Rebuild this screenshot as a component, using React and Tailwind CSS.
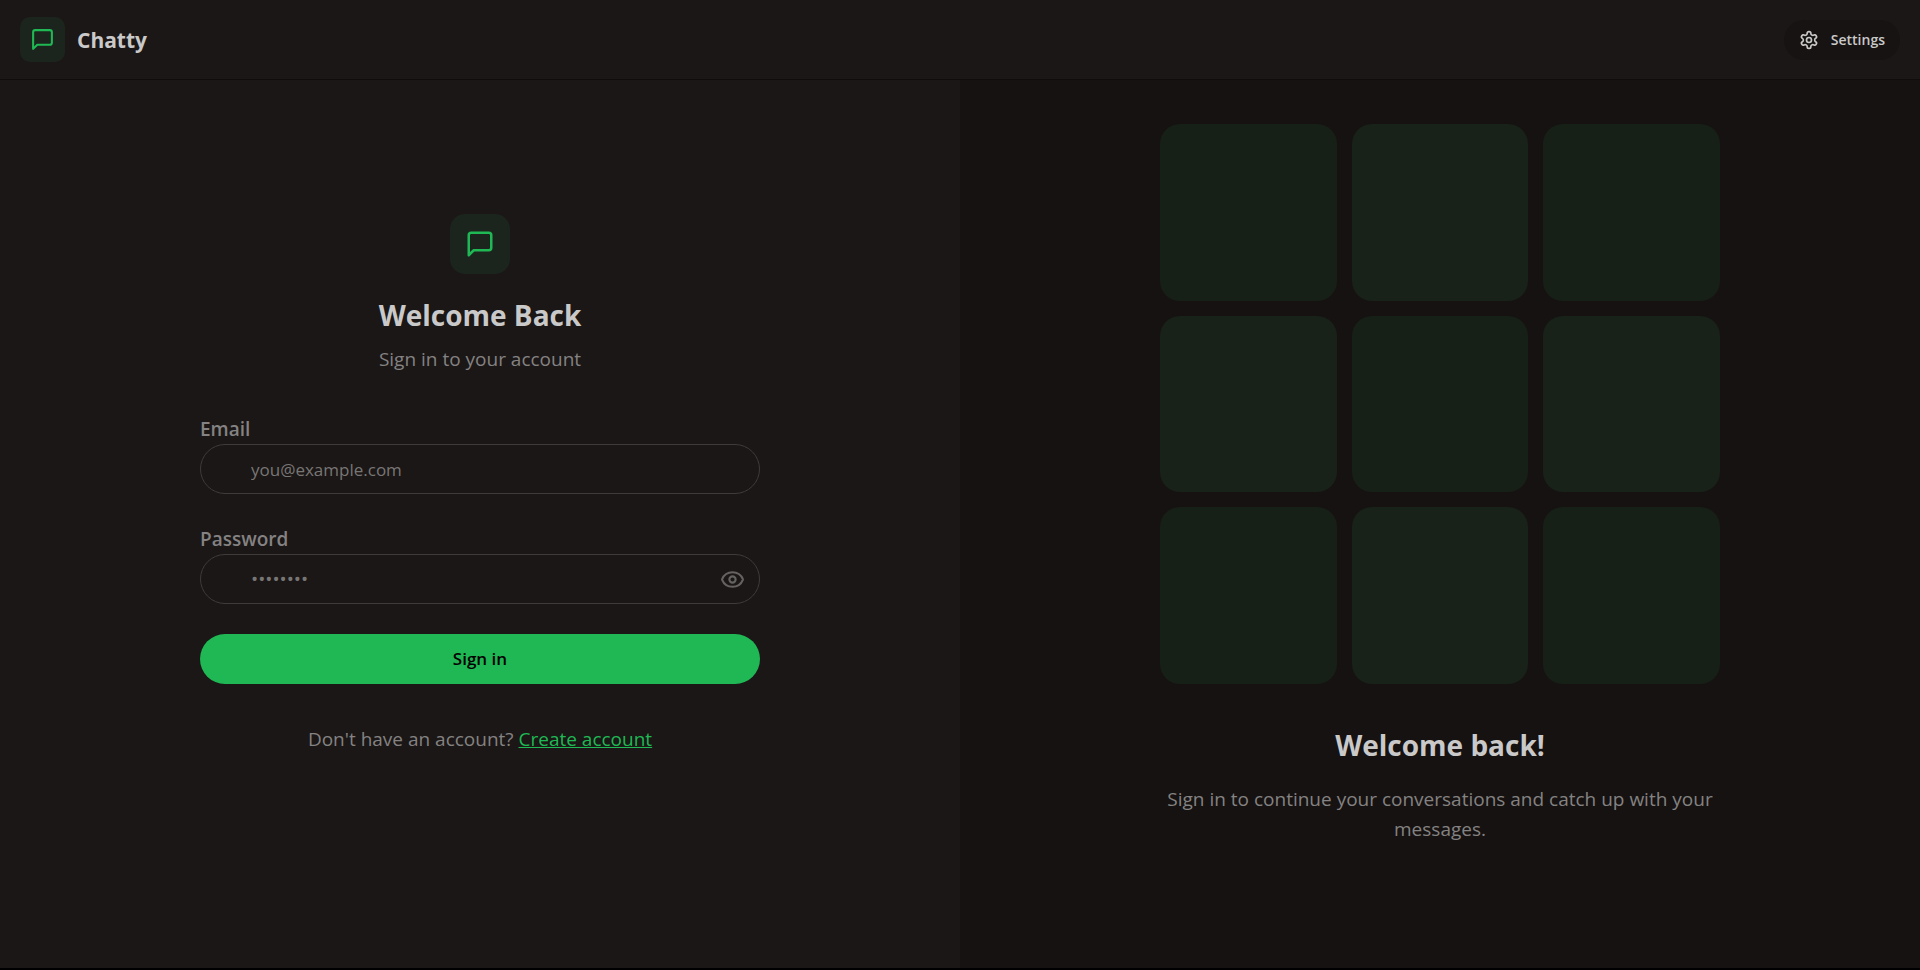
import { useState } from "react";
import { Eye, EyeOff } from "lucide-react";

function MessageIcon({ className }) {
  return (
    <svg
      viewBox="0 0 24 24"
      fill="none"
      stroke="currentColor"
      strokeWidth="2"
      strokeLinecap="round"
      strokeLinejoin="round"
      aria-hidden="true"
      className={className}
    >
      <path d="M21 15a2 2 0 0 1-2 2H7l-4 4V5a2 2 0 0 1 2-2h14a2 2 0 0 1 2 2z" />
    </svg>
  );
}

function SettingsIcon({ className }) {
  return (
    <svg
      viewBox="0 0 24 24"
      fill="none"
      stroke="currentColor"
      strokeWidth="2"
      strokeLinecap="round"
      strokeLinejoin="round"
      aria-hidden="true"
      className={className}
    >
      <path d="M12.22 2h-.44a2 2 0 0 0-2 2v.18a2 2 0 0 1-1 1.73l-.43.25a2 2 0 0 1-2 0l-.15-.08a2 2 0 0 0-2.73.73l-.22.38a2 2 0 0 0 .73 2.73l.15.1a2 2 0 0 1 1 1.72v.51a2 2 0 0 1-1 1.74l-.15.09a2 2 0 0 0-.73 2.73l.22.38a2 2 0 0 0 2.73.73l.15-.08a2 2 0 0 1 2 0l.43.25a2 2 0 0 1 1 1.73V20a2 2 0 0 0 2 2h.44a2 2 0 0 0 2-2v-.18a2 2 0 0 1 1-1.73l.43-.25a2 2 0 0 1 2 0l.15.08a2 2 0 0 0 2.73-.73l.22-.39a2 2 0 0 0-.73-2.73l-.15-.08a2 2 0 0 1-1-1.74v-.5a2 2 0 0 1 1-1.74l.15-.09a2 2 0 0 0 .73-2.73l-.22-.38a2 2 0 0 0-2.73-.73l-.15.08a2 2 0 0 1-2 0l-.43-.25a2 2 0 0 1-1-1.73V4a2 2 0 0 0-2-2z" />
      <circle cx="12" cy="12" r="3" />
    </svg>
  );
}

function Header() {
  return (
    <header className="flex h-20 items-center justify-between border-b border-[#0f0c0b] bg-[#1b1716] px-5">
      <a href="#home" className="flex items-center gap-3">
        <span className="flex size-[45px] items-center justify-center rounded-[10px] bg-[#1c251d]">
          <MessageIcon className="size-[25px] text-[#1fb854]" />
        </span>
        <span className="text-[21px] leading-7 font-bold">Chatty</span>
      </a>
      <a
        href="#settings"
        className="flex h-10 items-center gap-3 rounded-full bg-[#171312] px-[15px] text-[14px] leading-5 font-semibold"
      >
        <SettingsIcon className="size-5" />
        Settings
      </a>
    </header>
  );
}

const fieldClass =
  "h-[50px] w-full rounded-full border border-[#3e3b3a] bg-[#1b1716] pr-14 pl-[50px] text-[17px] text-[#cac9c9] placeholder:text-[#787675] outline-none focus:border-[#8a8887]";

function LoginForm() {
  const [showPassword, setShowPassword] = useState(false);
  return (
    <section className="flex flex-col items-center justify-center px-10 pb-20">
      <div className="w-full max-w-[560px]">
        <div className="mb-10 flex flex-col items-center text-center">
          <div className="flex size-[60px] items-center justify-center rounded-[15px] bg-[#1c251d]">
            <MessageIcon className="size-[30px] text-[#1fb854]" />
          </div>
          <h1 className="mt-5 text-[28px] leading-[42px] font-bold">Welcome Back</h1>
          <p className="mt-2 text-[#848282]">Sign in to your account</p>
        </div>
        <form className="flex flex-col gap-[30px]" onSubmit={(e) => e.preventDefault()}>
          <div>
            <label htmlFor="email" className="block font-semibold text-[#848282]">
              Email
            </label>
            <input id="email" type="email" placeholder="you@example.com" className={fieldClass} />
          </div>
          <div>
            <label htmlFor="password" className="block font-semibold text-[#848282]">
              Password
            </label>
            <div className="relative">
              <input
                id="password"
                type={showPassword ? "text" : "password"}
                placeholder="••••••••"
                className={`${fieldClass} placeholder:text-[19px]`}
              />
              <button
                type="button"
                aria-label="Toggle password visibility"
                onClick={() => setShowPassword(!showPassword)}
                className="absolute inset-y-0 right-0 flex items-center pr-[15px] text-[#656362]"
              >
                {showPassword ? <EyeOff className="size-[25px]" /> : <Eye className="size-[25px]" />}
              </button>
            </div>
          </div>
          <button
            type="submit"
            className="h-[50px] w-full rounded-full bg-[#1fb854] text-[17px] font-semibold text-black"
          >
            Sign in
          </button>
        </form>
        <p className="mt-10 text-center text-[#848282]">
          Don't have an account?{" "}
          <a href="#signup" className="text-[#1fb854] underline">
            Create account
          </a>
        </p>
      </div>
    </section>
  );
}

function AuthPattern() {
  return (
    <section className="flex flex-col items-center justify-center bg-[#161211] px-10 pb-20">
      <div className="w-full max-w-[560px] text-center">
        <div className="mb-10 grid grid-cols-3 gap-[15px]">
          {[...Array(9)].map((_, i) => (
            <div
              key={i}
              className={
                i % 2 === 0
                  ? "aspect-square rounded-[20px] bg-[#172017]"
                  : "aspect-square rounded-[20px] bg-[#182219]"
              }
            />
          ))}
        </div>
        <h2 className="mb-[18px] text-[28px] leading-[42px] font-bold">Welcome back!</h2>
        <p className="text-[#848282]">
          Sign in to continue your conversations and catch up with your messages.
        </p>
      </div>
    </section>
  );
}

export default function App() {
  return (
    <div className="min-h-screen bg-black pb-0.5">
      <div className="flex min-h-[calc(100vh-2px)] flex-col bg-[#1b1716] font-['Open_Sans',sans-serif] text-[19px] leading-[30px] text-[#cac9c9]">
        <Header />
        <main className="grid flex-1 lg:grid-cols-2">
          <LoginForm />
          <AuthPattern />
        </main>
      </div>
    </div>
  );
}
